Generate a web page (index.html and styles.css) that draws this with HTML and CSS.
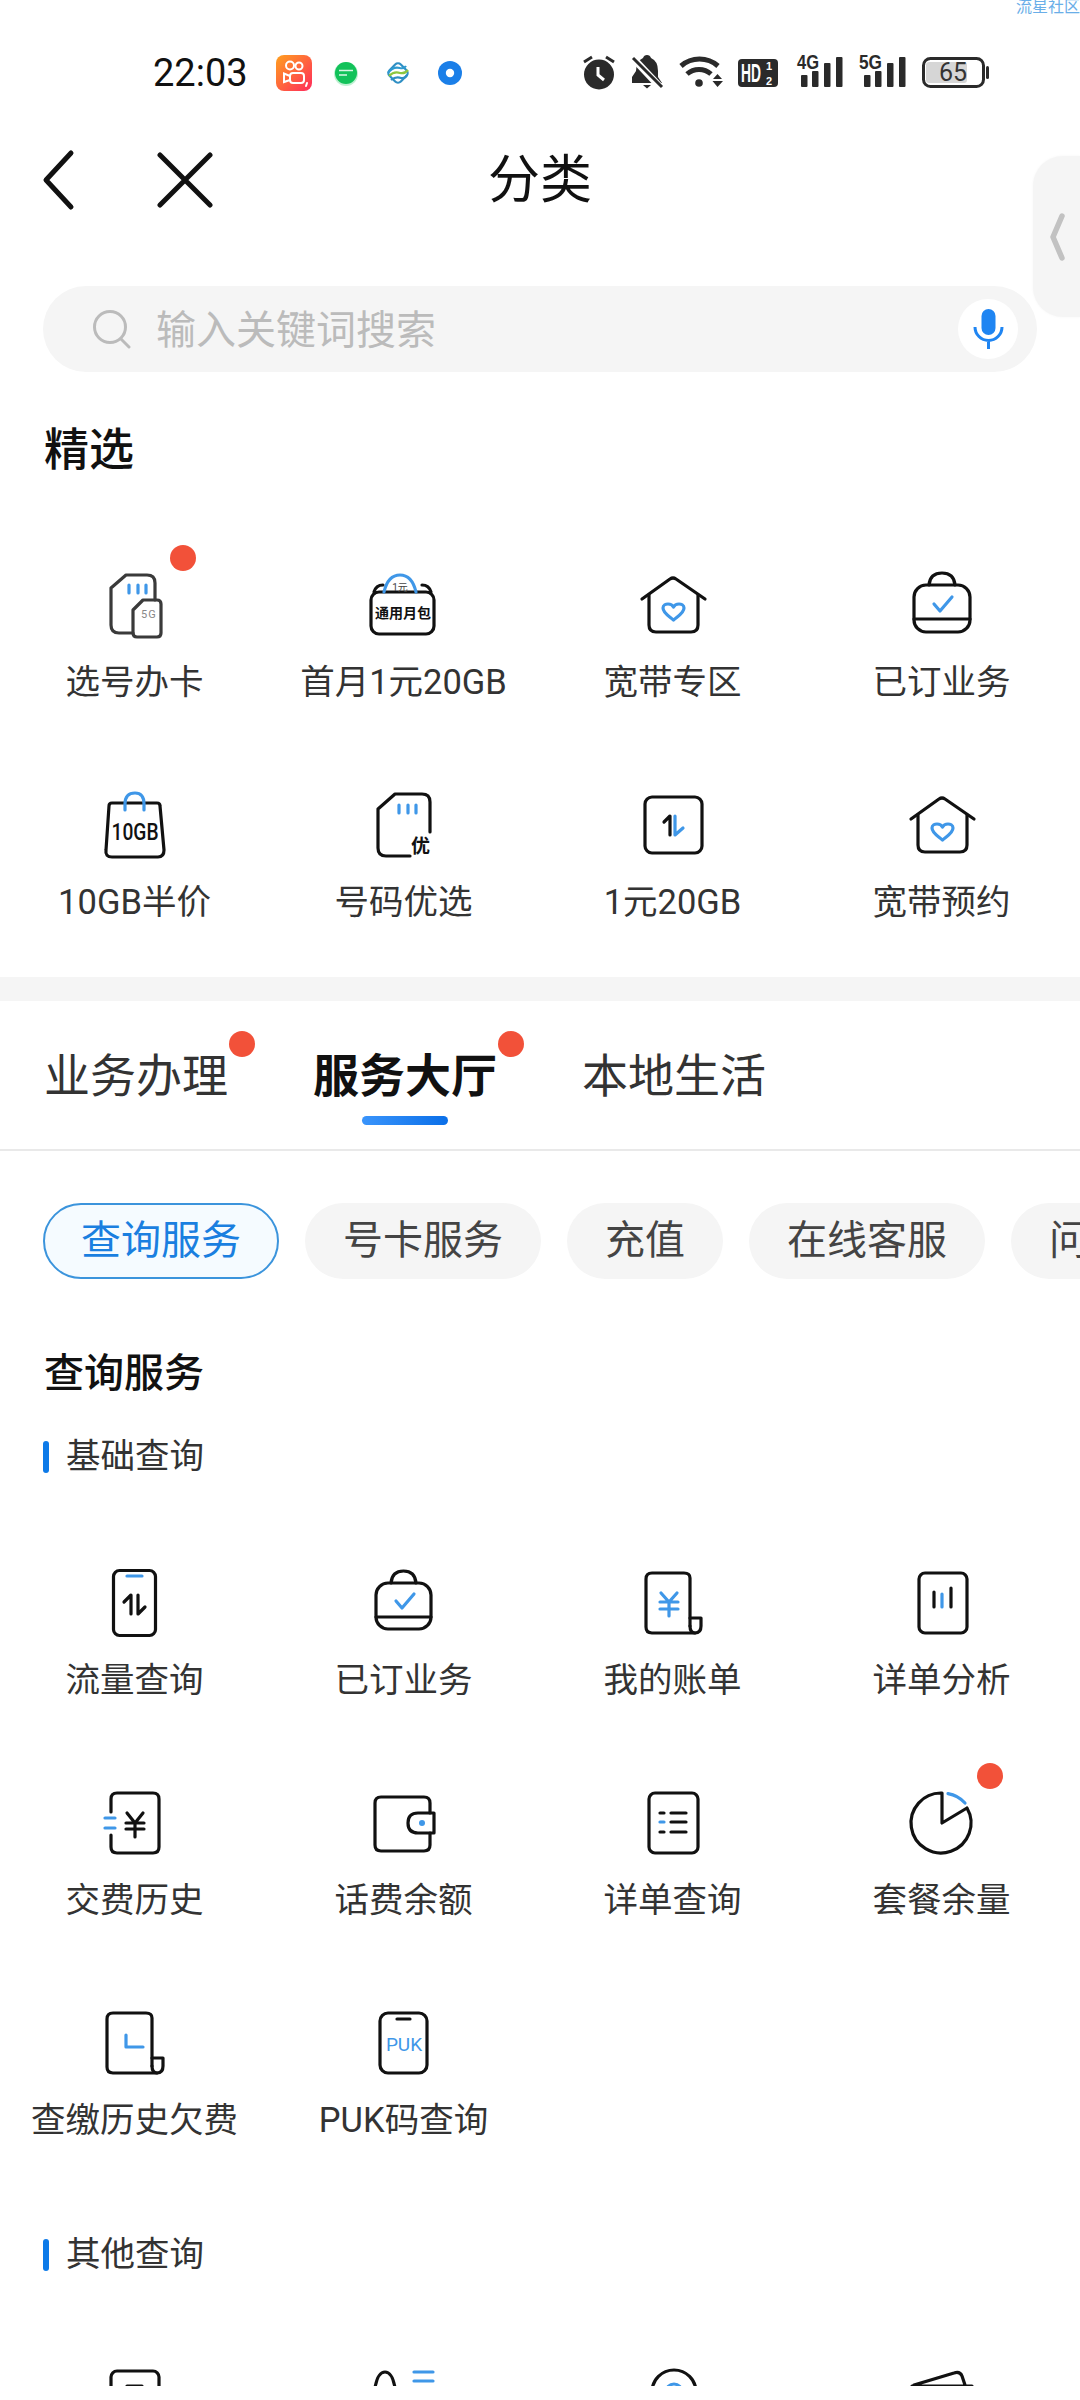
FILE: index.html

```html
<!DOCTYPE html>
<html lang="zh-CN">
<head>
    <meta charset="UTF-8">
    <title>分类</title>
    <meta name="viewport" content="width=device-width, initial-scale=1.0">
    <link rel="stylesheet" href="styles.css">
</head>
<body>
<div class="page">
    <div class="watermark">流星社区</div>

    <!-- status bar -->
    <div class="status">
        <span class="time">22:03</span>
        <div class="apps">
            <svg class="app" viewBox="0 0 36 36">
                <defs><linearGradient id="ks" x1="0" y1="0" x2="1" y2="1"><stop offset="0" stop-color="#ffa01e"/><stop offset="1" stop-color="#ff2a5c"/></linearGradient></defs>
                <rect width="36" height="36" rx="8" fill="url(#ks)"/>
                <g fill="none" stroke="#fff" stroke-width="2">
                    <circle cx="14" cy="10.5" r="4"/><circle cx="23" cy="11" r="3.5"/>
                    <rect x="14" y="18" width="14" height="10" rx="3"/>
                    <path d="M14 21 L8 18.5 V27 L14 25"/>
                    <path d="M31 28 L30 31" stroke-linecap="round"/>
                </g>
            </svg>
            <svg class="app" viewBox="0 0 36 36">
                <circle cx="18" cy="19" r="12" fill="#bff0d2"/>
                <circle cx="18" cy="18" r="11" fill="#12c25a"/>
                <path d="M11 15.5 H25 M11 20 H19" stroke="#d8f7e3" stroke-width="1.6" fill="none"/>
            </svg>
            <svg class="app" viewBox="0 0 36 36">
                <g fill="none" stroke-width="2.2">
                    <rect x="10" y="10" width="16" height="16" rx="4" transform="rotate(45 18 18)" stroke="#2f8fc4"/>
                    <path d="M8 18 Q13 11 20 13 Q24 14 26 11" stroke="#2f9ad0"/>
                    <path d="M9 21 Q14 16 20 18 Q25 19 28 15" stroke="#8cc63f"/>
                    <path d="M11 25 Q16 21 21 23 Q25 24 27 20" stroke="#2f8fc4"/>
                </g>
            </svg>
            <svg class="app" viewBox="0 0 36 36">
                <circle cx="18" cy="18" r="12" fill="#1b7fe8"/>
                <circle cx="18" cy="18" r="4.2" fill="#fff"/>
            </svg>
        </div>
        <svg class="sys" viewBox="0 -6 410 52">
            <!-- alarm -->
            <circle cx="19" cy="21.5" r="15" fill="#2a2a2a"/>
            <path d="M18 14 V22 L24 27" stroke="#fff" stroke-width="3" fill="none"/>
            <path d="M4 9 L12 4 M26 4 L34 9" stroke="#2a2a2a" stroke-width="3" fill="none"/>
            <!-- muted bell -->
            <path d="M67 2 Q70 2 71 5 Q78 8 78 18 V24 L82 30 H52 V24 L56 18 Q56 8 63 5 Q64 2 67 2 Z" fill="#2a2a2a"/>
            <path d="M63 32 H71 L67 35.5 Z" fill="#2a2a2a"/>
            <path d="M51 3 L82 36" stroke="#fff" stroke-width="7"/>
            <path d="M53 5 L82 34" stroke="#2a2a2a" stroke-width="3"/>
            <!-- wifi -->
            <g fill="none" stroke="#2a2a2a" stroke-width="5">
                <path d="M101 13 A28 28 0 0 1 138 13"/>
                <path d="M107 21 A18 18 0 0 1 131 21"/>
            </g>
            <circle cx="119" cy="30" r="3.8" fill="#2a2a2a"/>
            <path d="M133 26 L137.5 21 L142 26 Z M132.500 28 H143 L137.5 34 Z" fill="#2a2a2a"/>
            <!-- HD -->
            <rect x="158" y="6" width="40" height="28" rx="4" fill="#2a2a2a"/>
            <text class="hd" x="161" y="29" textLength="20" lengthAdjust="spacingAndGlyphs">HD</text>
            <text class="hd-sm" x="186" y="17">1</text>
            <text class="hd-sm" x="186" y="32">2</text>
            <!-- 4G -->
            <text class="net" x="217" y="16" textLength="22" lengthAdjust="spacingAndGlyphs">4G</text>
            <rect x="221" y="22" width="6.500" height="12" rx="1" fill="#2a2a2a"/>
            <rect x="232" y="18" width="6.500" height="16" rx="1" fill="#2a2a2a"/>
            <rect x="244" y="10" width="6.500" height="24" rx="1" fill="#2a2a2a"/>
            <rect x="256" y="4" width="6.500" height="30" rx="1" fill="#2a2a2a"/>
            <!-- 5G -->
            <text class="net" x="279" y="16" textLength="23" lengthAdjust="spacingAndGlyphs">5G</text>
            <rect x="284" y="22" width="6.500" height="12" rx="1" fill="#2a2a2a"/>
            <rect x="295" y="18" width="6.500" height="16" rx="1" fill="#2a2a2a"/>
            <rect x="307" y="10" width="6.500" height="24" rx="1" fill="#2a2a2a"/>
            <rect x="319" y="4" width="6.500" height="30" rx="1" fill="#2a2a2a"/>
            <!-- battery -->
            <rect x="343.500" y="5.500" width="60" height="28" rx="7" fill="none" stroke="#2a2a2a" stroke-width="3"/>
            <rect x="346" y="9" width="41" height="21" rx="3" fill="#d6d6d6"/>
            <rect x="406" y="13" width="3" height="13" rx="1.500" fill="#2a2a2a"/>
            <text class="batt" x="373" y="28">65</text>
        </svg>
    </div>

    <!-- nav -->
    <div class="nav">
        <div class="nav-left">
            <svg class="nav-back" viewBox="0 0 34 64"><path d="M30 5 L5 32 L30 59"/></svg>
            <svg class="nav-close" viewBox="0 0 56 56"><path d="M3 3 L53 53 M53 3 L3 53"/></svg>
        </div>
        <h1 class="nav-title">分类</h1>
    </div>

    <div class="side-tab">
        <svg viewBox="0 0 18 50"><path d="M14 4 L5 25 L14 46"/></svg>
    </div>

    <!-- search -->
    <div class="search">
        <svg class="search-ico" viewBox="0 0 40 40"><circle cx="17" cy="18" r="15.500"/><path d="M28 30 L36 38"/></svg>
        <span class="search-text">输入关键词搜索</span>
        <div class="mic">
            <svg viewBox="0 0 31 42">
                <rect x="8.500" y="1" width="14" height="26" rx="7" fill="#1f85f2"/>
                <path d="M2 19 A13.500 13.500 0 0 0 29 19 M15.500 32 V41" fill="none" stroke="#1f85f2" stroke-width="3"/>
            </svg>
        </div>
    </div>

    <h2 class="pick-title">精选</h2>

    <div class="grid grid-pick">
        <div class="cell">
            <i class="dot cell-dot"></i>
            <svg class="ico soft" viewBox="0 0 80 72">
                <path d="M60 30 V13 Q60 5 52 5 H31 L16 18 V55 Q16 63 24 63 H38"/>
                <path d="M48 30 H62 Q66 30 66 34 V63 Q66 67 62 67 H42 Q38 67 38 63 V40 Z"/>
                <path class="bl" d="M34 15 V23 M43 15 V23 M51 15 V23"/>
                <text class="t-tiny" x="46" y="48">5G</text>
            </svg>
            <span class="lbl">选号办卡</span>
        </div>
        <div class="cell">
            <svg class="ico" viewBox="0 0 80 72">
                <rect x="7" y="22" width="63" height="42" rx="8"/>
                <path d="M10 22 Q12 15 19 15 M58 15 Q65 15 67 22"/>
                <path class="bl" d="M20 22 Q24 5 36 5 Q48 5 52 22"/>
                <text class="t-mini" x="36" y="21">1元</text>
                <text class="t-pack" x="39" y="48">通用月包</text>
            </svg>
            <span class="lbl">首月1元20GB</span>
        </div>
        <div class="cell">
            <svg class="ico" viewBox="0 0 80 72">
                <path d="M9 29 L37 9 Q40 7 43 9 L72 29"/>
                <path d="M16 25 V55 Q16 62 23 62 H58 Q65 62 65 55 V25"/>
                <path class="bl" d="M40.500 50 C36 46 30 43 30 38 C30 35 33 34 35 34 C37.500 34 39.500 35 40.500 37 C41.500 35 43.500 34 46 34 C48 34 51 35 51 38 C51 43 45 46 40.500 50 Z"/>
            </svg>
            <span class="lbl">宽带专区</span>
        </div>
        <div class="cell">
            <svg class="ico" viewBox="0 0 80 72">
                <rect x="12" y="15" width="56" height="47" rx="12"/>
                <path d="M12 49 H68 M27 15 Q28 3 40 3 Q52 3 53 15"/>
                <path class="bl" d="M32 34 L38 41 L50 27"/>
            </svg>
            <span class="lbl">已订业务</span>
        </div>
        <div class="cell">
            <svg class="ico" viewBox="0 0 80 72">
                <path d="M17 13 H62 Q65 13 65 16 L69 60 Q69 67 63 67 H17 Q10 67 11 60 L14 16 Q14 13 17 13 Z"/>
                <path class="bl" d="M30 20 V14 Q30 3 40 3 Q49 3 49 14 V20"/>
                <text class="t-gb" x="40" y="50" textLength="47" lengthAdjust="spacingAndGlyphs">10GB</text>
            </svg>
            <span class="lbl">10GB半价</span>
        </div>
        <div class="cell">
            <svg class="ico" viewBox="0 0 80 72">
                <path d="M66 42 V12 Q66 4 58 4 H31 L14 19 V58 Q14 66 22 66 H46"/>
                <path class="bl" d="M35 15 V23 M44 15 V23 M52 15 V23"/>
                <text class="t-you" x="47" y="63">优</text>
            </svg>
            <span class="lbl">号码优选</span>
        </div>
        <div class="cell">
            <svg class="ico" viewBox="0 0 80 72">
                <rect x="12" y="7" width="57" height="56" rx="7"/>
                <path d="M37 45 V26 L31 32"/>
                <path class="bl" d="M42 26 V45 L50 38"/>
            </svg>
            <span class="lbl">1元20GB</span>
        </div>
        <div class="cell">
            <svg class="ico" viewBox="0 0 80 72">
                <path d="M9 29 L37 9 Q40 7 43 9 L72 29"/>
                <path d="M16 25 V55 Q16 62 23 62 H58 Q65 62 65 55 V25"/>
                <path class="bl" d="M40.500 50 C36 46 30 43 30 38 C30 35 33 34 35 34 C37.500 34 39.500 35 40.500 37 C41.500 35 43.500 34 46 34 C48 34 51 35 51 38 C51 43 45 46 40.500 50 Z"/>
            </svg>
            <span class="lbl">宽带预约</span>
        </div>
    </div>

    <div class="band"></div>

    <!-- tabs -->
    <div class="tabs">
        <div class="tab">业务办理<i class="dot tab-dot"></i></div>
        <div class="tab tab-on">服务大厅<i class="dot tab-dot"></i><i class="tab-line"></i></div>
        <div class="tab">本地生活</div>
    </div>

    <div class="chips">
        <span class="chip chip-on">查询服务</span>
        <span class="chip">号卡服务</span>
        <span class="chip">充值</span>
        <span class="chip">在线客服</span>
        <span class="chip">问题反馈</span>
    </div>

    <h2 class="sec-title">查询服务</h2>
    <div class="sub-title">基础查询</div>

    <div class="grid grid-query">
        <div class="cell">
            <svg class="ico" viewBox="0 0 80 72">
                <rect x="18.500" y="2.500" width="42" height="65" rx="6"/>
                <path class="bl" d="M32 8 H47"/>
                <path d="M36 46 V27 L29 34 M43 27 V46 L50 39"/>
            </svg>
            <span class="lbl">流量查询</span>
        </div>
        <div class="cell">
            <svg class="ico" viewBox="0 0 80 72">
                <rect x="12" y="15" width="55" height="46" rx="12"/>
                <path d="M12 49 H67 M27 15 Q28 3 39.500 3 Q51 3 52 15"/>
                <path class="bl" d="M32 33 L38 40 L50 26"/>
            </svg>
            <span class="lbl">已订业务</span>
        </div>
        <div class="cell">
            <svg class="ico" viewBox="0 0 80 72">
                <path d="M57 58 V10 Q57 5 51 5 H19 Q13 5 13 11 V59 Q13 65 19 65 H62"/>
                <path d="M57 50 H68 V58 Q68 65 62 65 Q57 65 57 58"/>
                <path class="bl" d="M28 25 L36 34 L44 25 M36 34 V48 M27 34 H45 M27 41 H45"/>
            </svg>
            <span class="lbl">我的账单</span>
        </div>
        <div class="cell">
            <svg class="ico" viewBox="0 0 80 72">
                <rect x="17" y="5" width="48" height="60" rx="6"/>
                <path d="M32 24 V39 M49 20 V39"/>
                <path class="bl" d="M40 26 V39"/>
            </svg>
            <span class="lbl">详单分析</span>
        </div>
        <div class="cell">
            <svg class="ico" viewBox="0 0 80 72">
                <path d="M16 24 V11 Q16 5 22 5 H58 Q64 5 64 11 V59 Q64 65 58 65 H22 Q16 65 16 59 V47"/>
                <path class="bl" d="M10 30 H20 M10 40 H20"/>
                <path d="M32 25 L40 35 L48 25 M40 35 V49 M31 35 H49 M31 41 H49"/>
            </svg>
            <span class="lbl">交费历史</span>
        </div>
        <div class="cell">
            <svg class="ico" viewBox="0 0 80 72">
                <path d="M66 25 V15 Q66 9 60 9 H17 Q11 9 11 15 V57 Q11 63 17 63 H60 Q66 63 66 57 V45"/>
                <path d="M70 25 H54 Q44 25 44 35 Q44 45 54 45 H70 Z"/>
                <circle class="bf" cx="58" cy="35" r="3"/>
            </svg>
            <span class="lbl">话费余额</span>
        </div>
        <div class="cell">
            <svg class="ico" viewBox="0 0 80 72">
                <rect x="16" y="5" width="49" height="60" rx="6"/>
                <path d="M27 25 H31 M38 25 H53 M38 34 H53 M27 44 H31 M38 44 H53"/>
                <path class="bl" d="M27 34 H31"/>
            </svg>
            <span class="lbl">详单查询</span>
        </div>
        <div class="cell">
            <i class="dot cell-dot"></i>
            <svg class="ico" viewBox="0 0 80 72">
                <path d="M40 5 A30 30 0 1 0 65 20 L40 35 Z"/>
                <path class="bl" d="M46 5.600 A30 30 0 0 1 63 15"/>
            </svg>
            <span class="lbl">套餐余量</span>
        </div>
        <div class="cell">
            <svg class="ico" viewBox="0 0 80 72">
                <path d="M57 58 V10 Q57 5 51 5 H18 Q12 5 12 11 V59 Q12 65 18 65 H62"/>
                <path d="M57 50 H68 V58 Q68 65 62 65 Q57 65 57 58"/>
                <path class="bl" d="M31 27 V39 H48"/>
            </svg>
            <span class="lbl">查缴历史欠费</span>
        </div>
        <div class="cell">
            <svg class="ico" viewBox="0 0 80 72">
                <rect x="16" y="5" width="47" height="60" rx="8"/>
                <path d="M33 11 H46"/>
                <text class="t-puk" x="40" y="43">PUK</text>
            </svg>
            <span class="lbl">PUK码查询</span>
        </div>
    </div>

    <div class="sub-title sub-other">其他查询</div>

    <div class="grid grid-other">
        <div class="cell">
            <svg class="ico" viewBox="0 0 80 72">
                <rect x="16" y="5" width="48" height="60" rx="6"/>
                <path d="M32 20 H47"/>
            </svg>
        </div>
        <div class="cell">
            <svg class="ico" viewBox="0 0 80 72">
                <path d="M10 30 Q12 6 21 6 Q30 6 32 30"/>
                <path class="bl" d="M50 6 H69 M50 15 H69"/>
            </svg>
        </div>
        <div class="cell">
            <svg class="ico" viewBox="0 0 80 72">
                <circle cx="41" cy="26" r="22"/>
                <circle class="bl" cx="41" cy="26" r="8"/>
            </svg>
        </div>
        <div class="cell">
            <svg class="ico" viewBox="0 0 80 72">
                <path d="M12 19 L52 7 Q58 5 60 10 L63 19 M10 20 H70"/>
            </svg>
        </div>
    </div>
</div>
</body>
</html>
```

FILE: styles.css

```css
* {
    box-sizing: border-box;
}
body {
    margin: 0;
    background: #fff;
    font-family: Roboto, "Noto Sans CJK SC", sans-serif;
    color: #333;
}
h1, h2 {
    margin: 0;
}
.page {
    position: relative;
    width: 1080px;
    height: 2386px;
    overflow: hidden;
    background: #fff;
}
.watermark {
    position: absolute;
    top: -3px;
    left: 1016px;
    width: 64px;
    font-size: 16px;
    line-height: 20px;
    color: #6aaee8;
    white-space: nowrap;
}

/* status bar */
.status {
    display: flex;
    align-items: center;
    height: 130px;
    padding: 16px 0 0 153px;
}
.time {
    width: 123px;
    font-size: 38px;
    color: #111;
}
.apps {
    display: flex;
    gap: 16px;
}
.app {
    width: 36px;
    height: 36px;
}
.sys {
    width: 410px;
    height: 52px;
    margin-left: 112px;
}
.hd {
    font: 700 26px "Liberation Sans", sans-serif;
    fill: #fff;
}
.hd-sm {
    font: 700 11px "Liberation Sans", sans-serif;
    fill: #fff;
}
.net {
    font: 700 21px "Liberation Sans", sans-serif;
    fill: #2a2a2a;
}
.batt {
    font: 400 25px Roboto, sans-serif;
    fill: #333;
    text-anchor: middle;
}

/* nav */
.nav {
    position: relative;
    display: flex;
    justify-content: center;
    align-items: center;
    height: 96px;
}
.nav-left {
    position: absolute;
    left: 41px;
    top: 18px;
    display: flex;
    align-items: center;
    gap: 82px;
}
.nav-back {
    width: 34px;
    height: 64px;
}
.nav-close {
    width: 56px;
    height: 56px;
}
.nav-back path, .nav-close path {
    fill: none;
    stroke: #111;
    stroke-width: 5;
    stroke-linecap: round;
    stroke-linejoin: round;
}
.nav-title {
    padding-bottom: 5px;
    font-size: 52px;
    font-weight: 400;
    color: #111;
}
.side-tab {
    position: absolute;
    top: 156px;
    right: 0;
    display: flex;
    align-items: center;
    width: 47px;
    height: 161px;
    padding-left: 15px;
    background: #f5f5f5;
    border-radius: 30px 0 0 30px;
    box-shadow: 0 0 3px rgba(0,0,0,0.04);
}
.side-tab svg {
    width: 18px;
    height: 50px;
}
.side-tab path {
    fill: none;
    stroke: #c2c2c2;
    stroke-width: 5.5;
    stroke-linecap: round;
    stroke-linejoin: round;
}

/* search */
.search {
    display: flex;
    align-items: center;
    width: 994px;
    height: 86px;
    margin: 60px 0 0 43px;
    padding: 0 19px 0 50px;
    background: #f5f5f5;
    border-radius: 43px;
}
.search-ico {
    width: 40px;
    height: 40px;
    fill: none;
    stroke: #bbb;
    stroke-width: 3;
    stroke-linecap: round;
}
.search-text {
    margin-left: 23px;
    padding-bottom: 5px;
    font-size: 40px;
    color: #bbb;
}
.mic {
    display: flex;
    align-items: center;
    justify-content: center;
    width: 60px;
    height: 60px;
    margin-left: auto;
    background: #fff;
    border-radius: 50%;
}
.mic svg {
    width: 31px;
    height: 42px;
}
.pick-title {
    margin: 49px 0 0 44px;
    font-size: 45px;
    line-height: 60px;
    font-weight: 500;
    color: #111;
}

/* icon grids */
.grid {
    display: grid;
    grid-template-columns: repeat(4, 269px);
    grid-auto-rows: 135px;
    row-gap: 85px;
}
.grid-pick {
    margin-top: 89px;
}
.grid-query, .grid-other {
    margin-top: 88px;
}
.cell {
    position: relative;
    display: flex;
    flex-direction: column;
    align-items: center;
}
.ico {
    flex-shrink: 0;
    width: 80px;
    height: 72px;
    fill: none;
    stroke: #111;
    stroke-width: 3.2;
    stroke-linecap: round;
    stroke-linejoin: round;
}
.ico.soft {
    stroke: #3a3a3a;
}
.ico .bl {
    stroke: #3f97e8;
}
.ico .bf {
    fill: #3f97e8;
    stroke: none;
}
.ico text {
    stroke: none;
    text-anchor: middle;
    font-family: Roboto, "Noto Sans CJK SC", sans-serif;
}
.ico .t-tiny {
    font-size: 11px;
    fill: #888;
    text-anchor: start;
    letter-spacing: 1px;
}
.ico .t-mini {
    font-size: 10px;
    fill: #444;
}
.ico .t-pack {
    font-size: 14px;
    font-weight: 700;
    fill: #111;
}
.ico .t-gb {
    font-size: 24px;
    font-weight: 500;
    fill: #111;
}
.ico .t-you {
    font-size: 19px;
    font-weight: 700;
    fill: #111;
    text-anchor: start;
}
.ico .t-puk {
    font-size: 19px;
    fill: #3f97e8;
}
.lbl {
    margin-top: 16px;
    font-size: 34.5px;
    line-height: 48px;
    white-space: nowrap;
}
.dot {
    position: absolute;
    display: block;
    width: 26px;
    height: 26px;
    background: #f25139;
    border-radius: 50%;
}
.cell-dot {
    top: -25px;
    left: 170px;
}
.band {
    height: 24px;
    margin-top: 52px;
    background: #f5f5f5;
}

/* tabs */
.tabs {
    display: flex;
    gap: 85px;
    height: 150px;
    padding: 45px 0 0 44px;
    border-bottom: 2px solid #e9e9e9;
}
.tab {
    position: relative;
    height: 60px;
    font-size: 46px;
    line-height: 60px;
    color: #333;
}
.tab-on {
    font-weight: 700;
    color: #111;
}
.tab-dot {
    top: -15px;
    left: 185px;
}
.tab-line {
    position: absolute;
    left: 49px;
    top: 70px;
    display: block;
    width: 86px;
    height: 9px;
    background: linear-gradient(90deg, #3a94fb, #0a6fe8);
    border-radius: 5px;
}

/* chips */
.chips {
    display: flex;
    gap: 26px;
    margin: 52px 0 0 43px;
    overflow: hidden;
}
.chip {
    flex-shrink: 0;
    height: 76px;
    padding: 0 38px;
    font-size: 40px;
    line-height: 76px;
    color: #444;
    background: #f5f5f5;
    border-radius: 38px;
}
.chip-on {
    padding: 0 36px;
    line-height: 72px;
    color: #1a7fe0;
    background: #f5fbff;
    border: 2px solid #3b94dc;
}
.sec-title {
    margin: 67px 0 0 44px;
    font-size: 40px;
    line-height: 56px;
    font-weight: 500;
    color: #111;
}
.sub-title {
    position: relative;
    margin: 30px 0 0 66px;
    font-size: 34.5px;
    line-height: 48px;
}
.sub-title::before {
    content: "";
    position: absolute;
    left: -23px;
    top: 9px;
    width: 6px;
    height: 32px;
    background: #0d7ae8;
    border-radius: 3px;
}
.sub-other {
    margin-top: 87px;
}
```
